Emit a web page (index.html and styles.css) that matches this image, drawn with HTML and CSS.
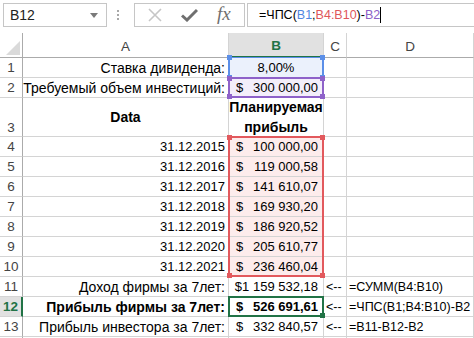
FILE: index.html
```html
<!DOCTYPE html>
<html lang="en">
<head>
    <meta charset="UTF-8">
    <title>ЧПС</title>
    <link rel="stylesheet" href="styles.css">
</head>
<body>
    <div class="toolbar">
        <div class="namebox">
            <span>B12</span>
            <svg class="dropdown" width="8" height="5" viewBox="0 0 8 5"><path d="M0 0h8L4 5z" fill="#7a7a7a"/></svg>
        </div>
        <div class="grip"></div>
        <div class="fx-buttons">
            <svg width="14" height="14" viewBox="0 0 14 14"><path d="M1 1L13 13M13 1L1 13" stroke="#c6c6c6" stroke-width="1.6"/></svg>
            <svg width="17" height="14" viewBox="0 0 17 14"><path d="M1 7.5L6 12L16 2" stroke="#6f6f6f" stroke-width="3" fill="none"/></svg>
            <span class="fx">fx</span>
        </div>
        <div class="formula">=ЧПС(<span class="ref-blue">B1</span>;<span class="ref-red">B4:B10</span>)-<span class="ref-purple">B2</span><span class="cursor"></span></div>
    </div>

    <div class="sheet">
        <div class="hdr corner"><span class="tri"></span></div>
        <div class="hdr col">A</div>
        <div class="hdr col active-col">B</div>
        <div class="hdr col">C</div>
        <div class="hdr col">D</div>

        <div class="hdr row">1</div>
        <div class="cell right label">Ставка дивиденда:</div>
        <div class="cell center fill-blue pct">8,00%</div>
        <div class="cell"></div>
        <div class="cell"></div>

        <div class="hdr row">2</div>
        <div class="cell right label">Требуемый объем инвестиций:</div>
        <div class="cell money fill-purple"><span>$</span><span>300 000,00</span></div>
        <div class="cell"></div>
        <div class="cell"></div>

        <div class="hdr row bottom">3</div>
        <div class="cell center bold label">Data</div>
        <div class="cell center bold wrap label">Планируемая прибыль</div>
        <div class="cell"></div>
        <div class="cell"></div>

        <div class="hdr row">4</div>
        <div class="cell right date">31.12.2015</div>
        <div class="cell money fill-red"><span>$</span><span>100 000,00</span></div>
        <div class="cell"></div>
        <div class="cell"></div>

        <div class="hdr row">5</div>
        <div class="cell right date">31.12.2016</div>
        <div class="cell money fill-red"><span>$</span><span>119 000,58</span></div>
        <div class="cell"></div>
        <div class="cell"></div>

        <div class="hdr row">6</div>
        <div class="cell right date">31.12.2017</div>
        <div class="cell money fill-red"><span>$</span><span>141 610,07</span></div>
        <div class="cell"></div>
        <div class="cell"></div>

        <div class="hdr row">7</div>
        <div class="cell right date">31.12.2018</div>
        <div class="cell money fill-red"><span>$</span><span>169 930,20</span></div>
        <div class="cell"></div>
        <div class="cell"></div>

        <div class="hdr row">8</div>
        <div class="cell right date">31.12.2019</div>
        <div class="cell money fill-red"><span>$</span><span>186 920,52</span></div>
        <div class="cell"></div>
        <div class="cell"></div>

        <div class="hdr row">9</div>
        <div class="cell right date">31.12.2020</div>
        <div class="cell money fill-red"><span>$</span><span>205 610,77</span></div>
        <div class="cell"></div>
        <div class="cell"></div>

        <div class="hdr row">10</div>
        <div class="cell right date">31.12.2021</div>
        <div class="cell money fill-red"><span>$</span><span>236 460,04</span></div>
        <div class="cell"></div>
        <div class="cell"></div>

        <div class="hdr row">11</div>
        <div class="cell right label">Доход фирмы за 7лет:</div>
        <div class="cell money tight"><span>$1 159 532,18</span></div>
        <div class="cell arrow">&lt;--</div>
        <div class="cell expr">=СУММ(B4:B10)</div>

        <div class="hdr row active-row">12</div>
        <div class="cell right bold label">Прибыль фирмы за 7лет:</div>
        <div class="cell money bold"><span>$</span><span>526 691,61</span></div>
        <div class="cell arrow">&lt;--</div>
        <div class="cell expr">=ЧПС(B1;B4:B10)-B2</div>

        <div class="hdr row">13</div>
        <div class="cell right label">Прибыль инвестора за 7лет:</div>
        <div class="cell money"><span>$</span><span>332 840,57</span></div>
        <div class="cell arrow">&lt;--</div>
        <div class="cell expr">=B11-B12-B2</div>

        <div class="hdr row"></div>
        <div class="cell"></div>
        <div class="cell"></div>
        <div class="cell"></div>
        <div class="cell"></div>

        <!-- reference highlights drawn over the cells -->
        <div class="range range-blue"><i class="h tl"></i><i class="h tr"></i><i class="h bl"></i><i class="h br"></i></div>
        <div class="range range-purple"><i class="h tl"></i><i class="h tr"></i><i class="h bl"></i><i class="h br"></i></div>
        <div class="range range-red"><i class="h tl"></i><i class="h tr"></i><i class="h bl"></i><i class="h br"></i></div>
        <div class="range range-active"><i class="h br"></i></div>
    </div>
</body>
</html>
```

FILE: styles.css
```css
body {
    margin: 0;
    font-family: "Liberation Sans", Arial, sans-serif;
    font-size: 13px;
    color: #000;
    background: #fff;
    width: 474px;
    height: 338px;
    overflow: hidden;
}
.toolbar {
    height: 33px;
    display: flex;
    align-items: flex-start;
    padding-top: 3px;
    box-sizing: border-box;
}
.namebox {
    width: 104px;
    height: 24px;
    margin-left: 3px;
    border: 1px solid #c6c6c6;
    box-sizing: border-box;
    display: flex;
    align-items: center;
    justify-content: space-between;
    padding: 0 8px 0 6px;
    font-size: 14px;
    color: #222;
}
.dropdown {
    margin-top: 1px;
}
.grip {
    width: 2px;
    height: 10px;
    margin: 7px 15px 0 10px;
    background: repeating-linear-gradient(#a8a8a8 0 2px, transparent 2px 4px);
}
.fx-buttons {
    width: 111px;
    height: 24px;
    border: 1px solid #c6c6c6;
    box-sizing: border-box;
    display: flex;
    align-items: center;
    gap: 19px;
    padding-left: 13px;
}
.fx {
    font-family: "Liberation Serif", serif;
    font-style: italic;
    font-size: 19px;
    color: #6f6f6f;
    margin-top: -2px;
}
.formula {
    flex: 1;
    height: 24px;
    margin-left: 2px;
    border: 1px solid #c6c6c6;
    border-right: none;
    box-sizing: border-box;
    display: flex;
    align-items: center;
    padding-left: 11px;
    font-size: 12.5px;
    white-space: nowrap;
}
.ref-blue { color: #4f86e0; }
.ref-red { color: #e0565a; }
.ref-purple { color: #8c60c8; }
.cursor {
    width: 1px;
    height: 16px;
    background: #000;
}

.sheet {
    position: relative;
    display: grid;
    grid-template-columns: 23px 206px 95px 23px 127px;
    grid-template-rows: 25px 20px 20px 39px repeat(10, 20px) 4px;
}
.hdr {
    border-right: 1px solid #d4d4d4;
    border-bottom: 1px solid #ababab;
    color: #444;
    display: flex;
    align-items: center;
    justify-content: center;
    box-sizing: border-box;
    font-size: 13.5px;
}
.hdr.col {
    padding-top: 2px;
}
.hdr.row {
    border-right: 1px solid #ababab;
    border-bottom: 1px solid #d4d4d4;
}
.hdr.row.bottom {
    align-items: flex-end;
    padding-bottom: 1px;
}
.corner {
    border-right: 1px solid #ababab;
    position: relative;
}
.tri {
    position: absolute;
    right: 2px;
    bottom: 2px;
    width: 0;
    height: 0;
    border-left: 14px solid transparent;
    border-bottom: 14px solid #dadada;
}
.active-col {
    background: #e1e1e1;
    color: #217346;
    font-weight: bold;
    border-bottom: 2px solid #217346;
}
.active-row {
    background: #e1e1e1;
    color: #217346;
    font-weight: bold;
    border-right: 2px solid #217346 !important;
}
.cell {
    border-right: 1px solid #d4d4d4;
    border-bottom: 1px solid #d4d4d4;
    box-sizing: border-box;
    display: flex;
    align-items: center;
    padding: 0 3px 0 3px;
    white-space: nowrap;
    font-size: 12.5px;
}
.cell.label {
    font-size: 14px;
}
.cell.date,
.cell.pct {
    font-size: 13px;
}
.right {
    justify-content: flex-end;
}
.center {
    justify-content: center;
}
.bold {
    font-weight: bold;
}
.wrap {
    white-space: normal;
    text-align: center;
    line-height: 20px;
}
.money {
    justify-content: space-between;
    padding: 0 5px 0 7px;
    font-size: 13px;
}
.money.tight {
    padding-left: 3px;
    justify-content: flex-end;
}
.arrow {
    padding-left: 2px;
}
.expr {
    padding-left: 2px;
}
.fill-blue { background: #ebf1fc; }
.fill-purple { background: #f3eefa; }
.fill-red { background: #fdecec; }

/* absolutely placed in the grid area so they don't take cell slots */
.range {
    position: absolute;
    top: -1px;
    left: -1px;
    right: 0;
    bottom: 0;
    border: 2px solid;
    grid-column: 3 / 4;
}
.range-blue {
    grid-row: 2 / 3;
    border-color: #5b8fe8;
    border-width: 1px 2px;
    color: #5b8fe8;
}
.range-purple {
    grid-row: 3 / 4;
    border-color: #8e62c9;
    color: #8e62c9;
}
.range-red {
    grid-row: 5 / 12;
    border-color: #e2595d;
    color: #e2595d;
}
.range-active {
    grid-row: 13 / 14;
    border-color: #217346;
    color: #217346;
}
.h {
    position: absolute;
    width: 5px;
    height: 5px;
    background: currentColor;
}
.tl { left: -3px; top: -3px; }
.tr { right: -3px; top: -3px; }
.bl { left: -3px; bottom: -3px; }
.br { right: -3px; bottom: -3px; }
```
